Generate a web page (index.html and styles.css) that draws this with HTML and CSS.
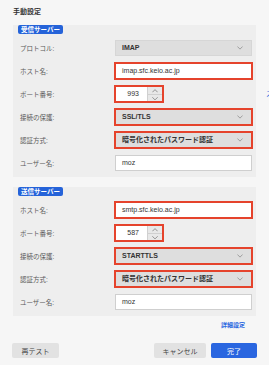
FILE: index.html
```html
<!DOCTYPE html>
<html lang="ja">
<head>
    <meta charset="UTF-8">
    <meta name="viewport" content="width=device-width, initial-scale=1.0">
    <title>手動設定</title>
    <link rel="stylesheet" href="styles.css">
</head>
<body>
    <div class="page">
        <h1 class="title">手動設定</h1>

        <div class="group">
            <span class="badge">受信サーバー</span>
            <div class="rows">
                <label class="label">プロトコル:</label>
                <div class="select">IMAP<svg class="chev" viewBox="0 0 8 5"><path d="M0.5 0.5 4 4 7.5 0.5"/></svg></div>

                <label class="label">ホスト名:</label>
                <div class="input mark">imap.sfc.keio.ac.jp</div>

                <label class="label">ポート番号:</label>
                <div class="port-row">
                    <div class="port mark">
                        <div class="num">993</div>
                        <div class="spin">
                            <svg viewBox="0 0 8 5"><path d="M0.5 4.5 4 1 7.5 4.5"/></svg>
                            <svg viewBox="0 0 8 5"><path d="M0.5 0.5 4 4 7.5 0.5"/></svg>
                        </div>
                    </div>
                    <span class="edge-link">ス</span>
                </div>

                <label class="label">接続の保護:</label>
                <div class="select mark">SSL/TLS<svg class="chev" viewBox="0 0 8 5"><path d="M0.5 0.5 4 4 7.5 0.5"/></svg></div>

                <label class="label">認証方式:</label>
                <div class="select mark">暗号化されたパスワード認証<svg class="chev" viewBox="0 0 8 5"><path d="M0.5 0.5 4 4 7.5 0.5"/></svg></div>

                <label class="label">ユーザー名:</label>
                <div class="input">moz</div>
            </div>
        </div>

        <div class="group">
            <span class="badge">送信サーバー</span>
            <div class="rows">
                <label class="label">ホスト名:</label>
                <div class="input mark">smtp.sfc.keio.ac.jp</div>

                <label class="label">ポート番号:</label>
                <div class="port-row">
                    <div class="port mark">
                        <div class="num">587</div>
                        <div class="spin">
                            <svg viewBox="0 0 8 5"><path d="M0.5 4.5 4 1 7.5 4.5"/></svg>
                            <svg viewBox="0 0 8 5"><path d="M0.5 0.5 4 4 7.5 0.5"/></svg>
                        </div>
                    </div>
                </div>

                <label class="label">接続の保護:</label>
                <div class="select mark">STARTTLS<svg class="chev" viewBox="0 0 8 5"><path d="M0.5 0.5 4 4 7.5 0.5"/></svg></div>

                <label class="label">認証方式:</label>
                <div class="select mark">暗号化されたパスワード認証<svg class="chev" viewBox="0 0 8 5"><path d="M0.5 0.5 4 4 7.5 0.5"/></svg></div>

                <label class="label">ユーザー名:</label>
                <div class="input">moz</div>
            </div>
        </div>

        <div class="advanced">
            <a class="link" href="#">詳細設定</a>
        </div>

        <div class="actions">
            <button class="btn">再テスト</button>
            <div class="spacer"></div>
            <button class="btn">キャンセル</button>
            <button class="btn primary">完了</button>
        </div>
    </div>
</body>
</html>
```

FILE: styles.css
```css
body {
    margin: 0;
    background: #f6f6f6;
    font-family: "Liberation Sans", "Noto Sans CJK JP", sans-serif;
    font-size: 7px;
    color: #333;
    overflow: hidden;
}

.page {
    padding: 7px 12px 0 13px;
}

.title {
    margin: 0;
    font-size: 7px;
    line-height: 10px;
    font-weight: bold;
    color: #333;
}

.group {
    margin-top: 11px;
    background: #eeeeee;
    padding: 0 4px 6px 7px;
    margin-right: 1px;
}

.group + .group {
    margin-top: 13px;
}

.badge {
    display: block;
    width: fit-content;
    margin: -3px 0 0 -2px;
    background: #2563d9;
    color: #fff;
    font-size: 6.5px;
    font-weight: bold;
    line-height: 9px;
    height: 9px;
    padding: 0 3px;
    border-radius: 2px;
}

.rows {
    display: grid;
    grid-template-columns: 95px 1fr;
    row-gap: 7px;
    align-items: center;
    margin-top: 6px;
}

.label {
    font-size: 6.5px;
    line-height: 9px;
    color: #5a5a5a;
}

.input,
.select {
    box-sizing: border-box;
    height: 16px;
    line-height: 14px;
    font-size: 7px;
    padding: 0 6px;
    border: 1px solid #cfcfcf;
    background: #fff;
    color: #333;
}

.select {
    display: flex;
    justify-content: space-between;
    align-items: center;
    background: #dedede;
    border-color: #d6d6d6;
    font-weight: bold;
    padding-right: 8px;
}

.chev {
    width: 6px;
    height: 4px;
    fill: none;
    stroke: #888;
    stroke-width: 1;
}

.mark {
    border: 1px solid #e5432c;
    box-shadow: 0 0 0 1px #e5432c;
}

.port-row {
    position: relative;
    display: flex;
}

.port {
    box-sizing: border-box;
    display: flex;
    width: 48px;
    height: 16px;
    background: #fff;
}

.num {
    flex: 1;
    text-align: right;
    padding-right: 8px;
    font-size: 7px;
    line-height: 14px;
}

.spin {
    width: 14px;
    display: flex;
    flex-direction: column;
    background: #e8e8e8;
    border-left: 1px solid #d0d0d0;
}

.spin svg {
    flex: 1;
    width: 100%;
    height: 4px;
    padding: 1px 4px 0;
    box-sizing: border-box;
    fill: none;
    stroke: #777;
    stroke-width: 1;
}

.spin svg + svg {
    border-top: 1px solid #d0d0d0;
}

.edge-link {
    position: absolute;
    right: -21px;
    top: 3px;
    font-size: 7px;
    line-height: 9px;
    color: #2a66e0;
}

.advanced {
    display: flex;
    justify-content: flex-end;
    padding: 5px 12px 0 0;
}

.link {
    font-size: 6px;
    font-weight: bold;
    color: #2a66e0;
    text-decoration: none;
    line-height: 9px;
}

.actions {
    display: flex;
    gap: 5px;
    margin: 13px 0 0 -1px;
}

.spacer {
    flex: 1;
}

.btn {
    height: 15px;
    border: none;
    border-radius: 2px;
    background: #e2e2e2;
    color: #444;
    font-family: inherit;
    font-size: 7px;
    padding: 0;
    width: 47px;
}

.btn + .spacer + .btn {
    width: 52px;
}

.primary {
    background: #2a66e0;
    color: #fff;
    width: 46px;
}
```
